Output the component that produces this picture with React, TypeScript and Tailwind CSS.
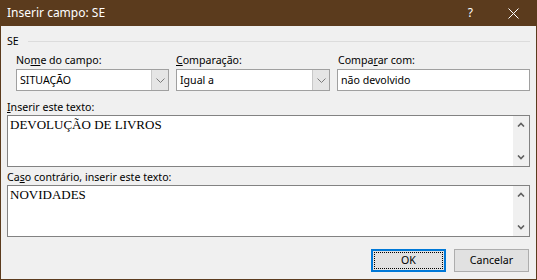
import type { ReactNode } from "react";

const UI = "font-['Noto_Sans','Open_Sans',sans-serif]";

/** Caixa de diálogo "Inserir campo: SE" ao estilo do Windows 10. */
export default function App() {
  return (
    <div className={`flex h-[280px] w-[537px] flex-col bg-[#5b3b1d] text-[10.6px] text-black ${UI}`}>
      <TitleBar />

      <div className="mx-px mb-px flex flex-1 flex-col bg-[#f0f0f0] px-[6px] pt-[7px]">
        {/* cabeçalho do grupo */}
        <div className="flex h-4 items-center gap-[9px] leading-4">
          <span>SE</span>
          <span className="h-px flex-1 bg-[#dcdcdc]" />
        </div>

        <div className="mt-[3px] grid grid-cols-[153px_154px_193px] gap-x-[7px] pl-[9px] leading-4">
          <Label>
            No<u>m</u>e do campo:
          </Label>
          <Label>
            <u>C</u>omparação:
          </Label>
          <Label className="pl-px">
            Compa<u>r</u>ar com:
          </Label>

          <Combo value="SITUAÇÃO" />
          <Combo value="Igual a" />
          <div className="mt-px flex h-[22px] items-center border border-[#a0a0a0] bg-white pl-[3px]">
            não devolvido
          </div>
        </div>

        <Label className="mt-2">
          <u>I</u>nserir este texto:
        </Label>
        <TextArea value="DEVOLUÇÃO DE LIVROS" />

        <Label className="mt-[2px]">
          Ca<u>s</u>o contrário, inserir este texto:
        </Label>
        <TextArea value="NOVIDADES" />

        <div className="mt-3 flex justify-end gap-2 pr-px">
          <button className="flex h-[23px] w-[75px] items-center justify-center border-2 border-[#0078d7] bg-[#e1e1e1] p-px">
            <span className="flex h-full w-full items-center justify-center border border-dotted border-black leading-none">
              OK
            </span>
          </button>
          <button className="flex h-[23px] w-[75px] items-center justify-center border border-[#adadad] bg-[#e1e1e1] leading-none">
            Cancelar
          </button>
        </div>
      </div>
    </div>
  );
}

function TitleBar() {
  return (
    <div className="flex h-[26px] items-center text-white">
      <span className="pl-[7px] text-[12px]">Inserir campo: SE</span>
      <span className="ml-auto mr-[35px] text-[12px]">?</span>
      <svg width="11" height="11" viewBox="0 0 11 11" className="mr-[18px]">
        <path d="M0.5 0.5 10.5 10.5 M10.5 0.5 0.5 10.5" stroke="#fff" strokeWidth="1" />
      </svg>
    </div>
  );
}

function Label({ children, className = "" }: { children: ReactNode; className?: string }) {
  return <div className={`h-4 leading-4 ${className}`}>{children}</div>;
}

function Combo({ value }: { value: string }) {
  return (
    <div className="mt-px flex h-[22px] border border-[#a0a0a0] bg-white">
      <span className="flex flex-1 items-center pl-[3px]">{value}</span>
      <span className="flex w-[17px] items-center justify-center border-l border-[#c8c8c8] bg-[#e5e5e5]">
        <svg width="9" height="5" viewBox="0 0 9 5">
          <path d="M0.5 0.5 4.5 4.5 8.5 0.5" fill="none" stroke="#7a7a7a" strokeWidth="1" />
        </svg>
      </span>
    </div>
  );
}

function TextArea({ value }: { value: string }) {
  return (
    <div className="flex h-[52px] border border-[#828282] bg-white">
      <div className="flex-1 pl-[2px] pt-px font-['Liberation_Serif',serif] text-[13px] leading-[15px]">
        {value}
      </div>
      <div className="flex w-[16px] flex-col items-center justify-between bg-[#f0f0f0] py-[6px]">
        <svg width="8" height="5" viewBox="0 0 8 5">
          <path d="M1 4.5 4 1.5 7 4.5" fill="none" stroke="#606060" strokeWidth="1.6" />
        </svg>
        <svg width="8" height="5" viewBox="0 0 8 5">
          <path d="M1 0.5 4 3.5 7 0.5" fill="none" stroke="#606060" strokeWidth="1.6" />
        </svg>
      </div>
    </div>
  );
}
